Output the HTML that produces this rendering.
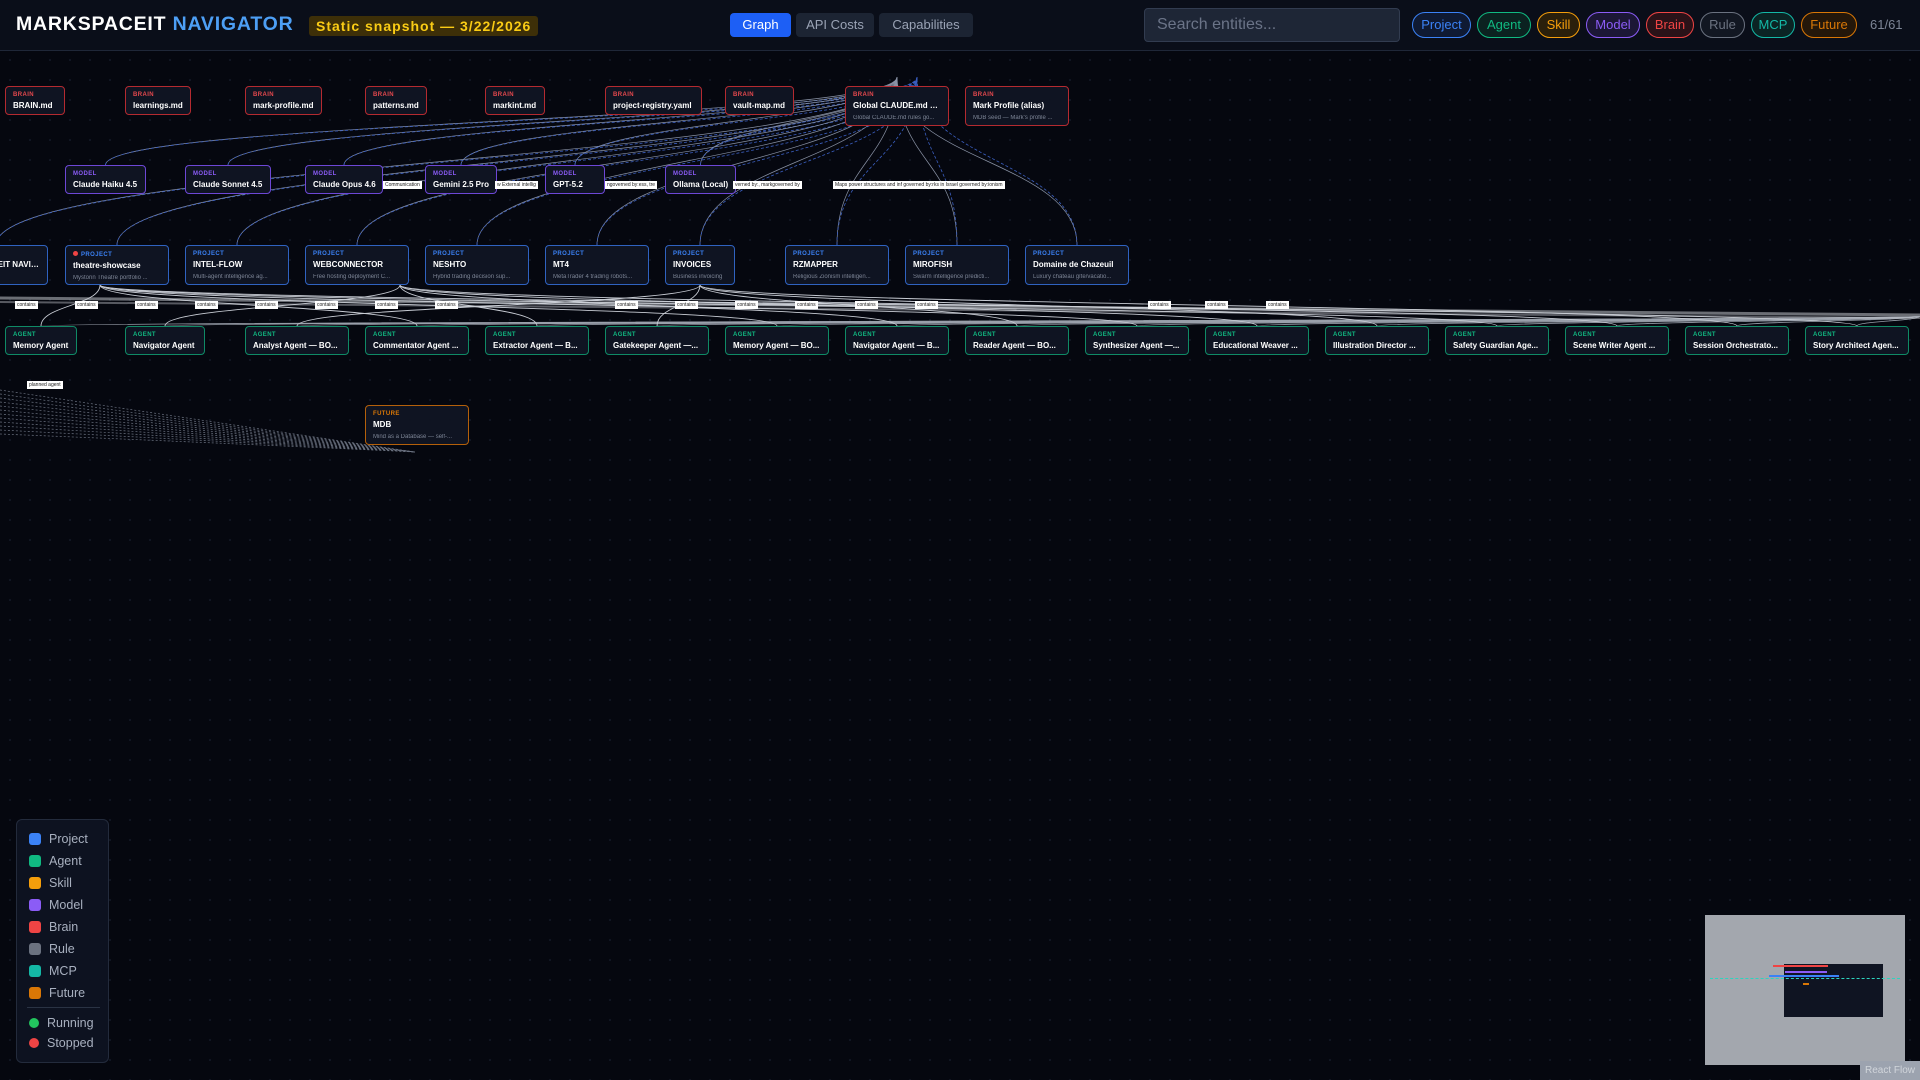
<!DOCTYPE html>
<html><head><meta charset="utf-8"><style>
*{box-sizing:border-box;margin:0;padding:0}
body{width:1920px;height:1080px;overflow:hidden;background:#05070f;font-family:"Liberation Sans","DejaVu Sans",sans-serif;position:relative;
background-image:radial-gradient(#141a28 1px,transparent 1px);background-size:20px 20px;background-position:0 50px}
.hdr{position:absolute;left:0;top:0;width:1920px;height:51px;background:#0a0e19;border-bottom:1px solid #1f2738}
.title{position:absolute;left:16px;top:13px;font-size:19.5px;font-weight:bold;color:#fff;letter-spacing:.8px;white-space:nowrap}
.title span{color:#4d9ff5}
.snap{position:absolute;left:309px;top:16px;height:20px;padding:0 7px;background:#3d2f08;color:#facc15;font-size:14px;font-weight:bold;line-height:20px;border-radius:3px;letter-spacing:1px;white-space:nowrap}
.tab{position:absolute;top:13px;height:24px;line-height:24px;font-size:13px;color:#9aa3b5;background:#1c2433;border-radius:4px;text-align:center}
.search{position:absolute;left:1144px;top:8px;width:256px;height:34px;background:#1e2636;border:1px solid #323c50;border-radius:4px;color:#6b7488;font-size:16px;line-height:32px;padding-left:12px}
.chip{position:absolute;top:12px;height:26px;line-height:24px;border:1.5px solid;border-radius:13px;font-size:13px;text-align:center}
.node{position:absolute;background:#0f1422;border:1.5px solid;border-radius:4px;padding:5px 6px 0 7px;white-space:nowrap;overflow:hidden}
.node .t{font-size:6px;font-weight:bold;letter-spacing:.4px}
.node .n{font-size:8px;font-weight:bold;color:#fff;margin-top:3px;overflow:hidden;text-overflow:ellipsis}
.node .d{font-size:6px;color:#7d8596;margin-top:5px;overflow:hidden;text-overflow:ellipsis}
.lbl{position:absolute;background:#fff;color:#222;font-size:5px;padding:1px 2px;white-space:nowrap}
.legend{position:absolute;left:16px;top:819px;width:93px;height:244px;background:#0d1220;border:1px solid #232b3c;border-radius:6px}
.li{position:absolute;left:12px;font-size:12.5px;color:#a8b0bf}
.li i{position:absolute;left:0;top:1px;width:12px;height:12px;border-radius:3px}
.mini{position:absolute;left:1705px;top:915px;width:200px;height:150px;background:#a3a7ae}
</style></head><body>
<svg id="edges" width="1920" height="1080" style="position:absolute;left:0;top:0"></svg>
<div class="hdr">
<div class="title">MARKSPACEIT <span>NAVIGATOR</span></div>
<div class="snap">Static snapshot — 3/22/2026</div>
<div class="tab" style="left:730px;width:61px;background:#1d5ff5;color:#fff">Graph</div>
<div class="tab" style="left:796px;width:78px">API Costs</div>
<div class="tab" style="left:879px;width:94px">Capabilities</div>
<div class="search">Search entities...</div>
<div class="chip" style="left:1412px;width:59px;color:#3b82f6;border-color:#3b82f6;background:#0f1a33">Project</div>
<div class="chip" style="left:1477px;width:54px;color:#10b981;border-color:#10b981;background:#0b2220">Agent</div>
<div class="chip" style="left:1537px;width:43px;color:#f59e0b;border-color:#f59e0b;background:#2a1f0b">Skill</div>
<div class="chip" style="left:1586px;width:54px;color:#8b5cf6;border-color:#8b5cf6;background:#1c1736">Model</div>
<div class="chip" style="left:1646px;width:48px;color:#ef4444;border-color:#ef4444;background:#2a1218">Brain</div>
<div class="chip" style="left:1700px;width:45px;color:#6b7280;border-color:#6b7280;background:#121722">Rule</div>
<div class="chip" style="left:1751px;width:44px;color:#14b8a6;border-color:#14b8a6;background:#0b2424">MCP</div>
<div class="chip" style="left:1801px;width:56px;color:#d97706;border-color:#d97706;background:#24170a">Future</div>
<div style="position:absolute;left:1870px;top:17px;font-size:13px;color:#7d8596">61/61</div>
</div>
<div id="nodes"></div>
<div class="legend">
<div class="li" style="top:12px"><i style="background:#3b82f6"></i><span style="margin-left:20px">Project</span></div>
<div class="li" style="top:34px"><i style="background:#10b981"></i><span style="margin-left:20px">Agent</span></div>
<div class="li" style="top:56px"><i style="background:#f59e0b"></i><span style="margin-left:20px">Skill</span></div>
<div class="li" style="top:78px"><i style="background:#8b5cf6"></i><span style="margin-left:20px">Model</span></div>
<div class="li" style="top:100px"><i style="background:#ef4444"></i><span style="margin-left:20px">Brain</span></div>
<div class="li" style="top:122px"><i style="background:#6b7280"></i><span style="margin-left:20px">Rule</span></div>
<div class="li" style="top:144px"><i style="background:#14b8a6"></i><span style="margin-left:20px">MCP</span></div>
<div class="li" style="top:166px"><i style="background:#d97706"></i><span style="margin-left:20px">Future</span></div>
<div style="position:absolute;left:10px;top:187px;width:73px;border-top:1px solid #2a3344"></div>
<div class="li" style="top:196px"><i style="background:#22c55e;border-radius:6px;width:10px;height:10px;top:2px"></i><span style="margin-left:18px">Running</span></div>
<div class="li" style="top:216px"><i style="background:#ef4444;border-radius:6px;width:10px;height:10px;top:2px"></i><span style="margin-left:18px">Stopped</span></div>
</div>
<div class="mini"><div style="position:absolute;left:79px;top:49px;width:99px;height:53px;background:#0f1422"></div>
<div style="position:absolute;left:5px;top:63px;width:190px;border-top:1px dashed #2dd4bf"></div>
<div style="position:absolute;left:68px;top:50px;width:55px;height:2px;background:#ef4444"></div>
<div style="position:absolute;left:80px;top:56px;width:42px;height:2px;background:#8b5cf6"></div>
<div style="position:absolute;left:64px;top:60px;width:70px;height:2px;background:#3b82f6"></div>
<div style="position:absolute;left:98px;top:68px;width:6px;height:2px;background:#d97706"></div></div>
<div style="position:absolute;left:1860px;top:1061px;width:60px;height:19px;background:#9ca3af;color:#d1d5db;font-size:10px;line-height:19px;text-align:center">React Flow</div>
<script>
const C={BRAIN:'#e5484d',MODEL:'#8b5cf6',PROJECT:'#3b82f6',AGENT:'#10b981',FUTURE:'#d97706'};
const BC={BRAIN:'#b42a30',MODEL:'#6d47d6',PROJECT:'#2f62c0',AGENT:'#0f8a66',FUTURE:'#b4600a'};
let N=[];
function add(t,x,y,w,n,d){N.push({t,x,y,w,n,d,h:d?40:29});}
[['BRAIN.md',60],['learnings.md',66],['mark-profile.md',77],['patterns.md',62],['markint.md',60],['project-registry.yaml',97],['vault-map.md',69]].forEach((b,i)=>add('BRAIN',5+120*i,86,b[1],b[0]));
add('BRAIN',845,86,104,'Global CLAUDE.md R...','Global CLAUDE.md rules go...');
add('BRAIN',965,86,104,'Mark Profile (alias)','MDB seed — Mark\'s profile ...');
[['Claude Haiku 4.5',81],['Claude Sonnet 4.5',86],['Claude Opus 4.6',78],['Gemini 2.5 Pro',72],['GPT-5.2',60],['Ollama (Local)',71]].forEach((b,i)=>add('MODEL',65+120*i,165,b[1],b[0]));
add('PROJECT',-56,245,104,'MARKSPACEIT NAVIGATER','...k platform ...');
[['theatre-showcase','Mystorin Theatre portfolio ...'],['INTEL-FLOW','Multi-agent intelligence ag...'],['WEBCONNECTOR','Free hosting deployment C...'],['NESHTO','Hybrid trading decision sup...'],['MT4','MetaTrader 4 trading robots...'],['INVOICES','Business invoicing'],['RZMAPPER','Religious Zionism intelligen...'],['MIROFISH','Swarm intelligence predicti...'],['Domaine de Chazeuil','Luxury château gîte/vacatio...']].forEach((b,i)=>add('PROJECT',65+120*i,245,i==5?70:104,b[0],b[1]));
['Memory Agent','Navigator Agent','Analyst Agent — BO...','Commentator Agent ...','Extractor Agent — B...','Gatekeeper Agent —...','Memory Agent — BO...','Navigator Agent — B...','Reader Agent — BO...','Synthesizer Agent —...','Educational Weaver ...','Illustration Director ...','Safety Guardian Age...','Scene Writer Agent ...','Session Orchestrato...','Story Architect Agen...'].forEach((n,i)=>add('AGENT',5+120*i,326,i<2?(i==0?72:80):104,n));
add('FUTURE',365,405,104,'MDB','Mind as a Database — self-...');
let h='';
N.forEach((o,i)=>{let dot=(o.t=='PROJECT'&&o.n=='theatre-showcase')?'<span style="display:inline-block;width:5px;height:5px;border-radius:3px;background:#ef4444;margin-right:3px"></span>':'';
h+=`<div class="node" style="left:${o.x}px;top:${o.y}px;width:${o.w}px;height:${o.h}px;border-color:${BC[o.t]}"><div class="t" style="color:${C[o.t]}">${dot}${o.t}</div><div class="n">${o.n}</div>${o.d?`<div class="d">${o.d}</div>`:''}</div>`;});
document.getElementById('nodes').innerHTML=h;
let s='';const ln=(x1,y1,x2,y2,c,w,da)=>s+=`<path d="M${x1} ${y1} C${x1} ${(y1+y2)/2} ${x2} ${(y1+y2)/2} ${x2} ${y2}" stroke="${c}" stroke-width="${w}" fill="none" ${da?'stroke-dasharray="3 2"':''}/>`;
const gx=897,gy=77;
N.filter(o=>o.t=='MODEL'||o.t=='PROJECT').forEach(o=>{ln(o.x+o.w/2,o.y,gx,gy,'#8a93a6',0.7);ln(o.x+o.w/2,o.y,gx+20,gy,'#3b5fc0',0.8,1);});
N.filter(o=>o.t=='AGENT').forEach((o,i)=>{ln(o.x+o.w/2,o.y,i%3*300+100,285,'#c8ccd4',0.9);ln(o.x+o.w/2,o.y,1920,316,'#9aa0ab',0.8);});
for(let k=0;k<12;k++){s+=`<path d="M0 ${390+k*4} Q200 ${420+k*2} 415 ${452}" stroke="#6b7280" stroke-width="0.7" fill="none" stroke-dasharray="2 2"/>`;}
s+=`<path d="M0 ${298} L1920 315" stroke="#d1d5db" stroke-width="3" opacity=".5"/><path d="M0 302 L1920 318" stroke="#d1d5db" stroke-width="2" opacity=".4"/>`;
document.getElementById('edges').innerHTML=s;
let L='';[15,75,135,195,255,315,375,435,615,675,735,795,855,915,1148,1205,1266].forEach(x=>L+=`<div class="lbl" style="left:${x}px;top:301px">contains</div>`);
[[383,181,'Communication'],[495,181,'w External intellig'],[605,181,'ngoverned by:ess, tre'],[733,181,'verned by:, markgoverned by'],[833,181,'Maps power structures and inf governed by:rks in Israel governed by:ionism'],[27,381,'planned agent']].forEach(a=>L+=`<div class="lbl" style="left:${a[0]}px;top:${a[1]}px">${a[2]}</div>`);
document.getElementById('nodes').insertAdjacentHTML('beforeend',L);
</script>
</body></html>
